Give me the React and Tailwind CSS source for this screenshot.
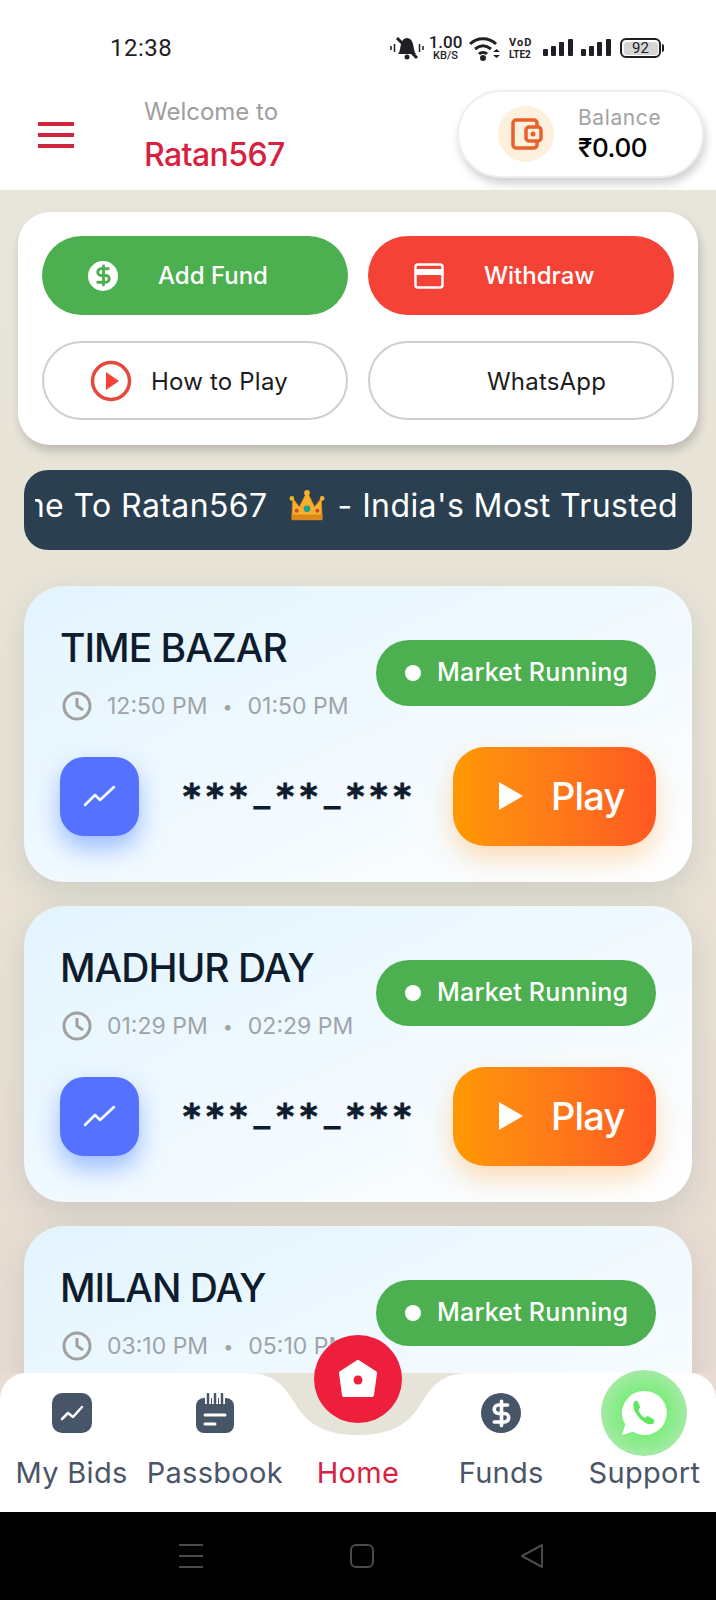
import React from "react";
import { DollarSign } from "lucide-react";

const markets = [
  { name: "TIME BAZAR", open: "12:50 PM", close: "01:50 PM" },
  { name: "MADHUR DAY", open: "01:29 PM", close: "02:29 PM" },
  { name: "MILAN DAY", open: "03:10 PM", close: "05:10 PM" },
];

const Bars = () => (
  <svg width="30" height="18" viewBox="0 0 30 18" fill="#1f2024">
    <rect x="0" y="10" width="5" height="7" rx="1" />
    <rect x="8" y="7" width="5" height="10" rx="1" />
    <rect x="16" y="3" width="5" height="14" rx="1" />
    <rect x="25" y="0" width="5" height="17" rx="1" />
  </svg>
);

const StatusBar = () => (
  <div className="h-[80px] flex items-center justify-between pt-[16px] pl-[110px] pr-[52px] text-[#1f2024]">
    <span className="text-[24px] font-['Roboto',sans-serif] tracking-[0.5px]">12:38</span>
    <div className="flex items-center">
      <svg width="34" height="26" viewBox="0 0 34 26" fill="none">
        <path d="M8 19c2-2 2-6 3-10C12 5 14 3 17 3s5 2 6 6c1 4 1 8 3 10z" fill="#1f2024" />
        <circle cx="17" cy="22" r="2.500" fill="#1f2024" />
        <path d="M7 3l20 20" stroke="#1f2024" strokeWidth="3" />
        <path d="M1 11v4M4.500 9v8M29.500 9v8M33 11v4" stroke="#1f2024" strokeWidth="1.500" />
      </svg>
      <div className="ml-[5px] w-[33px] flex flex-col items-center leading-none font-['Roboto',sans-serif] font-medium">
        <span className="text-[17px] leading-[15px]">1.00</span>
        <span className="text-[11px] leading-[11px]">KB/S</span>
      </div>
      <svg className="ml-[7px]" width="31" height="25" viewBox="0 0 31 25" fill="none" stroke="#1f2024" strokeWidth="3">
        <path d="M1 8c7-7 19-7 26 0" />
        <path d="M6 13c5-4 11-4 16 0" />
        <path d="M10 18c2-2 6-2 8 0" />
        <circle cx="14" cy="22" r="1.500" fill="#1f2024" />
        <path d="M24 16l3.500-3 3.500 3zM24 19l3.500 3 3.500-3z" fill="#1f2024" stroke="none" />
      </svg>
      <div className="ml-[9px] w-[25px] flex flex-col leading-none font-['Roboto',sans-serif] font-bold">
        <span className="text-[11px] leading-[12px] tracking-[1px]">VoD</span>
        <span className="text-[10px] leading-[11px]">LTE2</span>
      </div>
      <div className="ml-[9px]"><Bars /></div>
      <div className="ml-[8px]"><Bars /></div>
      <div className="ml-[9px] flex items-center">
        <div className="w-[41px] h-[20px] rounded-[6px] border-2 border-[#1f2024] p-[1.500px] flex">
          <div className="w-full bg-[#d6d6d6] rounded-[3px] flex items-center justify-center text-[15px] leading-none font-['Roboto',sans-serif]">92</div>
        </div>
        <div className="ml-[1px] w-[2px] h-[8px] bg-[#1f2024] rounded-r" />
      </div>
    </div>
  </div>
);

const Header = () => (
  <div className="h-[110px] bg-white flex items-start relative">
    <div className="ml-[38px] mt-[42px] w-[36px] flex flex-col gap-[7px]">
      <div className="h-[4px] bg-[#d2233f]" />
      <div className="h-[4px] bg-[#d2233f]" />
      <div className="h-[4px] bg-[#d2233f]" />
    </div>
    <div className="ml-[70px] mt-[16px] flex flex-col">
      <span className="text-[24px] leading-[32px] text-[#9e9e9e] font-['Inter',sans-serif]">Welcome to</span>
      <span className="mt-[7px] text-[32px] leading-[40px] font-medium text-[#d8213f] font-['Inter',sans-serif] tracking-[-0.6px]">Ratan567</span>
    </div>
    <div className="absolute left-[457px] top-[10px] w-[247px] h-[88px] rounded-[44px] bg-white border-2 border-[#eeeeee] shadow-[2px_6px_8px_rgba(0,0,0,0.18)] flex items-center pl-[39px]">
      <div className="w-[56px] h-[56px] rounded-full bg-[#fdf0dc] flex items-center justify-center">
        <svg width="36" height="36" viewBox="0 0 36 36" fill="none" stroke="#e8602c" strokeWidth="3.500" strokeLinejoin="round">
          <path d="M5 7a3 3 0 0 1 3-3h18a3 3 0 0 1 3 3v22a3 3 0 0 1-3 3H8a3 3 0 0 1-3-3z" />
          <rect x="18" y="11" width="15" height="14" rx="3" fill="#fdf0dc" />
          <circle cx="25" cy="18" r="2.500" fill="#e8602c" stroke="none" />
        </svg>
      </div>
      <div className="ml-[24px] flex flex-col">
        <span className="text-[21px] leading-[28px] text-[#a3a3a3] font-['Inter',sans-serif] tracking-[0.6px]">Balance</span>
        <span className="text-[26px] leading-[32px] text-black font-medium font-['Inter','Noto_Sans',sans-serif] tracking-[-0.4px]">₹0.00</span>
      </div>
    </div>
  </div>
);

const ActionButton = ({ className, icon, label, labelClass }) => (
  <button className={`h-[79px] rounded-[40px] flex items-center font-['Inter',sans-serif] text-[24px] ${className}`}>
    {icon}
    <span className={labelClass}>{label}</span>
  </button>
);

const Actions = () => (
  <div className="shrink-0 mx-[18px] mt-[22px] h-[233px] rounded-[32px] bg-white shadow-[2px_6px_10px_rgba(0,0,0,0.18)] px-[24px] pt-[24px] grid grid-cols-2 gap-x-[20px] gap-y-[26px] content-start">
    <ActionButton
      className="bg-[#4caf50] text-white font-medium"
      labelClass="ml-[40px]"
      icon={
        <div className="ml-[46px] w-[30px] h-[30px] rounded-full bg-white flex items-center justify-center">
          <DollarSign size={23} color="#4caf50" strokeWidth={3} />
        </div>
      }
      label="Add Fund"
    />
    <ActionButton
      className="bg-[#f44336] text-white font-medium"
      labelClass="ml-[40px]"
      icon={
        <svg className="ml-[46px]" width="30" height="26" viewBox="0 0 30 26">
          <rect x="1.500" y="1.500" width="27" height="23" rx="2.500" fill="none" stroke="#fff" strokeWidth="2.500" />
          <rect x="1.500" y="6" width="27" height="6" fill="#fff" />
        </svg>
      }
      label="Withdraw"
    />
    <ActionButton
      className="bg-white border-2 border-[#cfcfcf] text-[#1c1c22]"
      labelClass="ml-[19px] mt-[3px] tracking-[0.2px]"
      icon={
        <svg className="ml-[46px]" width="42" height="42" viewBox="0 0 42 42">
          <circle cx="21" cy="21" r="18.500" fill="none" stroke="#e5483c" strokeWidth="3.500" />
          <path d="M16 12l13 9-13 9z" fill="#f44336" />
        </svg>
      }
      label="How to Play"
    />
    <ActionButton
      className="bg-white border-2 border-[#cfcfcf] text-[#1c1c22]"
      labelClass="ml-[117px] mt-[3px] tracking-[0.2px]"
      label="WhatsApp"
    />
  </div>
);

const Crown = () => (
  <svg className="shrink-0" width="36" height="36" viewBox="0 0 38 36">
    <path d="M4 10l7 9 8-16 8 16 7-9 1 22H3z" fill="#f6b02c" stroke="#d98a1a" strokeWidth="1" strokeLinejoin="round" />
    <path d="M3 27h32v6H3z" fill="#d98a1a" />
    <circle cx="19" cy="4" r="3" fill="#f6b02c" />
    <circle cx="3" cy="10" r="2.500" fill="#f6b02c" />
    <circle cx="35" cy="10" r="2.500" fill="#f6b02c" />
    <circle cx="19" cy="21" r="3.500" fill="#1f9e8f" />
    <circle cx="8" cy="23" r="2" fill="#c2473a" />
    <circle cx="30" cy="23" r="2" fill="#c2473a" />
  </svg>
);

const Ticker = () => (
  <div className="shrink-0 mx-[24px] mt-[25px] h-[80px] rounded-[24px] bg-[#2a3f50] pl-[11px] pr-[14px] pb-[8px] flex items-center">
    <div className="w-full overflow-hidden flex justify-end items-center whitespace-nowrap text-white text-[32px] tracking-[0.4px] font-['Inter',sans-serif]">
      <span className="shrink-0">Welcome To Ratan567</span>
      <span className="shrink-0 ml-[21px] mr-[13px]"><Crown /></span>
      <span className="shrink-0">- India's Most Trusted</span>
    </div>
  </div>
);

const Result = ({ value }) => (
  <div className="mt-[25px] ml-[41px] text-[34px] leading-[44px] font-bold text-[#0f1c2e] [-webkit-text-stroke:0.8px_#0f1c2e] font-['DejaVu_Sans_Mono',monospace] whitespace-nowrap">
    {value.split("").map((ch, i) =>
      ch === "_" ? (
        <span key={i} className="inline-block w-[23.400px] text-center text-[27px] align-[5px]">{ch}</span>
      ) : (
        <span key={i} className="inline-block w-[23.400px] text-center">{ch}</span>
      )
    )}
  </div>
);

const MarketCard = ({ market }) => (
  <div className="shrink-0 h-[296px] rounded-[40px] bg-gradient-to-br from-[#e3f4fe] via-[#f0f9ff] to-[#ffffff] shadow-[0_10px_30px_rgba(100,130,140,0.2)] pl-[36px] pr-[36px] pt-[38px]">
    <div className="flex justify-between">
      <div className="flex flex-col">
        <span className="text-[39px] leading-[48px] font-medium text-[#0f1c2e] font-['Inter',sans-serif] tracking-[-1px]">{market.name}</span>
        <div className="mt-[17px] flex items-center text-[23px] text-[#a0a4a8] font-['Inter',sans-serif]">
          <svg className="ml-[2px]" width="30" height="30" viewBox="0 0 30 30" fill="none" stroke="#a0a0a0" strokeWidth="3">
            <circle cx="15" cy="15" r="13" />
            <path d="M15 7v8l6 4" />
          </svg>
          <span className="ml-[15px]">{market.open}</span>
          <span className="mx-[15px] text-[18px]">•</span>
          <span>{market.close}</span>
        </div>
      </div>
      <div className="mt-[16px] w-[280px] h-[66px] rounded-[33px] bg-[#4caf50] flex items-center text-white text-[25px] font-medium font-['Inter',sans-serif]">
        <div className="ml-[29px] w-[16px] h-[16px] rounded-full bg-white" />
        <span className="ml-[16px] tracking-[0.2px]">Market Running</span>
      </div>
    </div>
    <div className="mt-[23px] flex items-start">
      <div className="mt-[10px] w-[79px] h-[79px] rounded-[24px] bg-[#5472ff] shadow-[0_12px_24px_rgba(70,130,255,0.5)] flex items-center justify-center">
        <svg width="34" height="24" viewBox="0 0 34 24" fill="none" stroke="#fff" strokeWidth="2.500" strokeLinecap="round" strokeLinejoin="round">
          <path d="M2 21l10-10 5 5L31 3" />
        </svg>
      </div>
      <Result value="***_**_***" />
      <div className="ml-auto w-[203px] h-[99px] rounded-[32px] bg-gradient-to-r from-[#ff9800] to-[#ff5722] shadow-[0_12px_28px_rgba(255,170,70,0.4)] flex items-center text-white text-[38px] font-medium font-['Inter',sans-serif]">
        <svg className="ml-[46px]" width="24" height="30" viewBox="0 0 24 30" fill="#fff">
          <path d="M0 1l24 14L0 29z" />
        </svg>
        <span className="ml-[28px] tracking-[-0.8px]">Play</span>
      </div>
    </div>
  </div>
);

const NavItem = ({ icon, label, active }) => (
  <div className="flex flex-col items-center">
    <div className="h-[40px] flex items-center justify-center">{icon}</div>
    <span className={`mt-[20px] text-[29px] leading-[40px] tracking-[0.3px] whitespace-nowrap font-['Inter',sans-serif] ${active ? "text-[#d8213f]" : "text-[#4a5568]"}`}>
      {label}
    </span>
  </div>
);

const BottomNav = () => (
  <div className="absolute left-0 right-0 bottom-[88px] h-[139px] bg-white rounded-t-[26px] grid grid-cols-5 pt-[20px]">
    <svg className="absolute left-[246px] top-0" width="224" height="63" viewBox="0 0 224 63" fill="#e6e3d8">
      <path d="M0 0h224c-30 0-38 14-50 32C162 52 144 62 112 62S62 52 50 32C38 14 30 0 0 0z" />
    </svg>
    <NavItem
      label="My Bids"
      icon={
        <div className="w-[40px] h-[40px] rounded-[10px] bg-[#475569] flex items-center justify-center">
          <svg width="24" height="16" viewBox="0 0 24 16" fill="none" stroke="#fff" strokeWidth="2.500" strokeLinecap="round" strokeLinejoin="round">
            <path d="M2 14l6-6 5 4 9-10" />
          </svg>
        </div>
      }
    />
    <NavItem
      label="Passbook"
      icon={
        <svg width="38" height="40" viewBox="0 0 38 40">
          <rect x="0" y="5" width="38" height="35" rx="8" fill="#475569" />
          <path d="M12 1v10M19 1v10M26 1v10" stroke="#fff" strokeWidth="6" />
          <path d="M12 1v9M19 1v9M26 1v9" stroke="#475569" strokeWidth="2.500" strokeLinecap="round" />
          <path d="M9 22h20M9 31h10" stroke="#fff" strokeWidth="3" strokeLinecap="round" />
        </svg>
      }
    />
    <div className="relative">
      <NavItem label="Home" active icon={<div className="w-[40px]" />} />
      <div className="absolute left-1/2 -translate-x-1/2 -top-[58px] w-[88px] h-[88px] rounded-full bg-[#ee1f3c] flex items-center justify-center">
        <svg width="44" height="44" viewBox="0 0 44 44">
          <path d="M22 5L39 16 36 38H8L5 16z" fill="#fff" stroke="#fff" strokeWidth="4" strokeLinejoin="round" />
          <circle cx="22" cy="23" r="4.500" fill="#ee1f3c" />
        </svg>
      </div>
    </div>
    <NavItem
      label="Funds"
      icon={
        <div className="w-[40px] h-[40px] rounded-full bg-[#475569] flex items-center justify-center">
          <DollarSign size={29} color="#fff" strokeWidth={3} />
        </div>
      }
    />
    <NavItem
      label="Support"
      icon={
        <div className="w-[86px] h-[86px] rounded-full bg-[radial-gradient(circle,#7ced7c_35%,#c5e8c5_100%)] flex items-center justify-center">
          <svg width="48" height="48" viewBox="0 0 50 50">
            <path d="M25 2a23 23 0 0 0-19.500 35L2 48l11.500-3.500A23 23 0 1 0 25 2z" fill="#fff" />
            <path d="M15 13c-3 5 1 13 6 18s10 7 14 5l1-4-7-4-3 2c-3-1-6-5-7-8l2-3-3-7z" fill="#5ee65e" />
          </svg>
        </div>
      }
    />
  </div>
);

const SystemBar = () => (
  <div className="h-[88px] shrink-0 bg-black flex items-center justify-center gap-[146px] pl-[5px]">
    <svg width="26" height="26" viewBox="0 0 26 26" stroke="#4a4a4a" strokeWidth="2">
      <path d="M1 2h24M1 13h24M1 24h24" />
    </svg>
    <svg width="24" height="24" viewBox="0 0 24 24" fill="none" stroke="#4a4a4a" strokeWidth="2">
      <rect x="1" y="1" width="22" height="22" rx="5" />
    </svg>
    <svg width="24" height="24" viewBox="0 0 24 24" fill="none" stroke="#4a4a4a" strokeWidth="2" strokeLinejoin="round">
      <path d="M22 1v22L2 12z" />
    </svg>
  </div>
);

export default function App() {
  return (
    <div className="relative w-[716px] h-[1600px] overflow-hidden flex flex-col bg-gradient-to-b from-[#e8e6dc] via-[#e8e2d4] to-[#e8d8d0]">
      <div className="bg-white shrink-0">
        <StatusBar />
        <Header />
      </div>
      <div className="flex-1 min-h-0 mb-[139px] overflow-hidden flex flex-col">
        <Actions />
        <Ticker />
        <div className="shrink-0 mt-[36px] mx-[24px] flex flex-col gap-[24px]">
          {markets.map((market) => (
            <MarketCard key={market.name} market={market} />
          ))}
        </div>
      </div>
      <BottomNav />
      <SystemBar />
    </div>
  );
}
